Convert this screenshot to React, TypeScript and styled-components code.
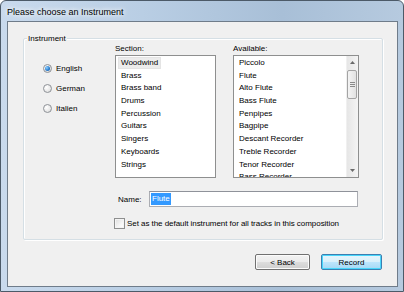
import React from 'react';
import styled, { createGlobalStyle } from 'styled-components';

const GlobalStyle = createGlobalStyle`
  html, body {
    margin: 0;
    padding: 0;
    background: #ffffff;
  }
  * {
    box-sizing: border-box;
  }
`;

const Window = styled.div`
  width: 404px;
  height: 292px;
  display: flex;
  flex-direction: column;
  padding: 0 5px 4px 6px;
  border: 1px solid #4c5a68;
  border-radius: 6px 6px 0 0;
  background: linear-gradient(to right, #c9daed 0%, #b9cee4 35%, #a8bfd7 70%, #b6cadf 100%);
  font-family: "Liberation Sans", Arial, sans-serif;
  color: #000;
  overflow: hidden;
`;

const TitleBar = styled.div`
  height: 20px;
  display: flex;
  align-items: center;
  font-size: 9px;
  padding-top: 1px;
  text-shadow: 0 0 6px #ffffff, 0 0 4px #ffffff;
`;

const Client = styled.div`
  flex: 1;
  display: flex;
  flex-direction: column;
  background: #f0f0f0;
  border: 1px solid #6f7c8a;
  padding: 16px 14px 0 15px;
  font-size: 8px;
`;

const GroupBox = styled.div`
  position: relative;
  height: 202px;
  border: 1px solid #d5dfe5;
  border-radius: 2px;
  box-shadow: inset 1px 1px 0 #ffffff, 1px 1px 0 #ffffff;
  padding-top: 4px;
  display: flex;
  flex-direction: column;
`;

const GroupLegend = styled.span`
  position: absolute;
  top: -6px;
  left: 3px;
  padding: 0 1px;
  line-height: 11px;
  background: #f0f0f0;
`;

const TopRow = styled.div`
  display: flex;
  align-items: flex-start;
`;

const RadioColumn = styled.div`
  width: 91px;
  padding: 15px 0 0 19px;
  display: flex;
  flex-direction: column;
`;

const RadioRow = styled.label`
  height: 20px;
  display: flex;
  align-items: center;
  gap: 4px;
`;

const RadioCircle = styled.span<{ checked?: boolean }>`
  position: relative;
  width: 9px;
  height: 9px;
  border-radius: 50%;
  border: 1px solid #8e9297;
  background: radial-gradient(circle at 35% 35%, #ffffff 0%, #e8e8e8 60%, #d4d4d4 100%);

  &::after {
    content: '';
    display: ${p => (p.checked ? 'block' : 'none')};
    position: absolute;
    left: 1px;
    top: 1px;
    width: 5px;
    height: 5px;
    border-radius: 50%;
    background: radial-gradient(circle at 35% 35%, #8fd0ff 0%, #2b7fd0 55%, #16539a 100%);
  }
`;

const ListColumn = styled.div<{ width: number; offset?: number }>`
  width: ${p => p.width}px;
  margin-left: ${p => p.offset ?? 0}px;
  display: flex;
  flex-direction: column;
`;

const ColumnLabel = styled.div`
  line-height: 11px;
  height: 11px;
  margin-bottom: 1px;
`;

const ListBox = styled.div`
  height: 123px;
  border: 1px solid #8e8f8f;
  background: #ffffff;
  display: flex;
  overflow: hidden;
`;

const ListItems = styled.div`
  flex: 1;
  padding: 1px 0 0 3px;
  overflow: hidden;
`;

const ListItem = styled.div`
  height: 12.7px;
  line-height: 12.7px;
  white-space: nowrap;
`;

const ItemText = styled.span<{ selected?: boolean }>`
  display: inline-block;
  padding: 0 2px;
  line-height: 10px;
  background: ${p => (p.selected ? '#ececec' : 'transparent')};
  outline: ${p => (p.selected ? '1px solid #e4e4e4' : 'none')};
`;

const ScrollBar = styled.div`
  width: 12px;
  display: flex;
  flex-direction: column;
  background: linear-gradient(to right, #e6e6e6, #f4f4f4);
  border-left: 1px solid #f0f0f0;
`;

const ScrollArrow = styled.div`
  height: 13px;
  display: flex;
  align-items: center;
  justify-content: center;
`;

const ScrollTrack = styled.div`
  flex: 1;
  padding: 1px 1px 0 0;
`;

const ScrollThumb = styled.div`
  height: 29px;
  border: 1px solid #a4a4a4;
  border-radius: 2px;
  background: linear-gradient(to right, #f4f4f4, #e2e2e2);
  display: flex;
  flex-direction: column;
  align-items: center;
  justify-content: center;
  gap: 1px;
`;

const GripLine = styled.span`
  width: 5px;
  height: 1px;
  background: #8a8a8a;
`;

const NameRow = styled.div`
  margin-top: 13px;
  padding-left: 94px;
  display: flex;
  align-items: center;
`;

const NameLabel = styled.span`
  width: 31px;
`;

const TextInput = styled.div`
  width: 209px;
  height: 16px;
  border: 1px solid #abadb3;
  border-top-color: #8f929a;
  background: #ffffff;
  padding: 0 0 0 1px;
  display: flex;
  align-items: center;
`;

const SelectedText = styled.span`
  display: inline-block;
  line-height: 12px;
  padding: 0 1px;
  background: #3399ff;
  color: #ffffff;
`;

const CheckRow = styled.label`
  margin-top: 11px;
  padding-left: 90px;
  display: flex;
  align-items: center;
  gap: 2px;
  letter-spacing: -0.05px;
`;

const CheckBox = styled.span`
  width: 11px;
  height: 11px;
  border: 1px solid #8e8f8f;
  background: linear-gradient(135deg, #dcdcdc 0%, #f6f6f6 60%, #ffffff 100%);
  box-shadow: inset 0 0 0 1px #f4f4f4;
`;

const ButtonRow = styled.div`
  margin-top: 14px;
  margin-right: 1px;
  display: flex;
  justify-content: flex-end;
  gap: 11px;
`;

const Button = styled.button<{ primary?: boolean; width: number }>`
  width: ${p => p.width}px;
  height: 16px;
  padding: 0;
  font-family: "Liberation Sans", Arial, sans-serif;
  font-size: 8px;
  color: #000;
  border-radius: 2px;
  border: 1px solid ${p => (p.primary ? '#3c7fb1' : '#707070')};
  box-shadow: inset 0 0 0 1px ${p => (p.primary ? '#48d6fb' : '#fbfbfb')};
  background: ${p =>
    p.primary
      ? 'linear-gradient(to bottom, #e6f5fc 0%, #d9f0fb 50%, #bde6fd 51%, #a6d9f4 100%)'
      : 'linear-gradient(to bottom, #f2f2f2 0%, #ebebeb 50%, #dddddd 51%, #cfcfcf 100%)'};
`;

const Arrow: React.FC<{ down?: boolean }> = ({ down }) => (
  <svg width="5" height="3" viewBox="0 0 5 3">
    <path d={down ? 'M0 0 H5 L2.5 3 Z' : 'M0 3 H5 L2.5 0 Z'} fill="#6a6a6a" />
  </svg>
);

const sections = ['Woodwind', 'Brass', 'Brass band', 'Drums', 'Percussion', 'Guitars', 'Singers', 'Keyboards', 'Strings'];

const available = [
  'Piccolo',
  'Flute',
  'Alto Flute',
  'Bass Flute',
  'Penpipes',
  'Bagpipe',
  'Descant Recorder',
  'Treble Recorder',
  'Tenor Recorder',
  'Bass Recorder',
];

const App: React.FC = () => {
  return (
    <>
      <GlobalStyle />
      <Window>
        <TitleBar>Please choose an Instrument</TitleBar>
        <Client>
          <GroupBox>
            <GroupLegend>Instrument</GroupLegend>
            <TopRow>
              <RadioColumn>
                <RadioRow>
                  <RadioCircle checked />
                  English
                </RadioRow>
                <RadioRow>
                  <RadioCircle />
                  German
                </RadioRow>
                <RadioRow>
                  <RadioCircle />
                  Italien
                </RadioRow>
              </RadioColumn>
              <ListColumn width={101}>
                <ColumnLabel>Section:</ColumnLabel>
                <ListBox>
                  <ListItems>
                    {sections.map((s, i) => (
                      <ListItem key={s}>
                        <ItemText selected={i === 0}>{s}</ItemText>
                      </ListItem>
                    ))}
                  </ListItems>
                </ListBox>
              </ListColumn>
              <ListColumn width={126} offset={17}>
                <ColumnLabel>Available:</ColumnLabel>
                <ListBox>
                  <ListItems>
                    {available.map(a => (
                      <ListItem key={a}>
                        <ItemText>{a}</ItemText>
                      </ListItem>
                    ))}
                  </ListItems>
                  <ScrollBar>
                    <ScrollArrow>
                      <Arrow />
                    </ScrollArrow>
                    <ScrollTrack>
                      <ScrollThumb>
                        <GripLine />
                        <GripLine />
                        <GripLine />
                      </ScrollThumb>
                    </ScrollTrack>
                    <ScrollArrow>
                      <Arrow down />
                    </ScrollArrow>
                  </ScrollBar>
                </ListBox>
              </ListColumn>
            </TopRow>
            <NameRow>
              <NameLabel>Name:</NameLabel>
              <TextInput>
                <SelectedText>Flute</SelectedText>
              </TextInput>
            </NameRow>
            <CheckRow>
              <CheckBox />
              Set as the default instrument for all tracks in this composition
            </CheckRow>
          </GroupBox>
          <ButtonRow>
            <Button width={55}>&lt; Back</Button>
            <Button width={61} primary>
              Record
            </Button>
          </ButtonRow>
        </Client>
      </Window>
    </>
  );
};

export default App;
